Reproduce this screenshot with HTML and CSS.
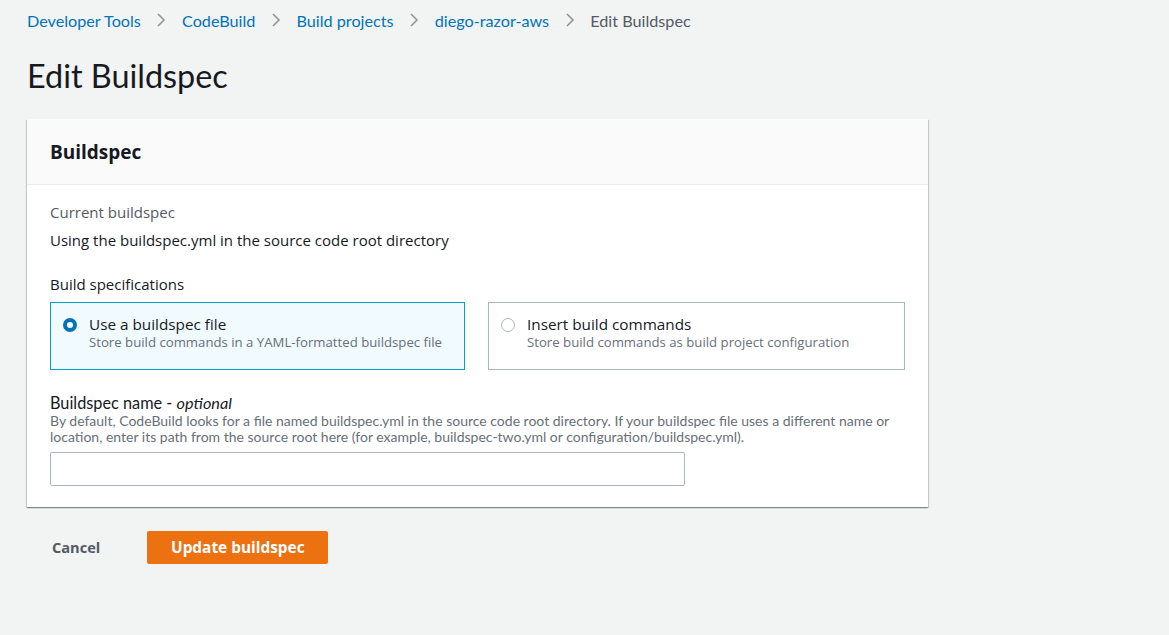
FILE: index.html
```html
<!DOCTYPE html>
<html lang="en">
<head>
<meta charset="utf-8">
<title>Edit Buildspec</title>
<link rel="stylesheet" href="styles.css">
</head>
<body>
<div class="page">
  <nav class="crumbs">
    <a class="crumb" href="#">Developer Tools</a>
    <svg class="chev" width="10" height="16" viewBox="0 0 10 16"><polyline points="2,2 8,8 2,14" fill="none" stroke="#879596" stroke-width="1.5"/></svg>
    <a class="crumb" href="#">CodeBuild</a>
    <svg class="chev" width="10" height="16" viewBox="0 0 10 16"><polyline points="2,2 8,8 2,14" fill="none" stroke="#879596" stroke-width="1.5"/></svg>
    <a class="crumb" href="#">Build projects</a>
    <svg class="chev" width="10" height="16" viewBox="0 0 10 16"><polyline points="2,2 8,8 2,14" fill="none" stroke="#879596" stroke-width="1.5"/></svg>
    <a class="crumb" href="#">diego-razor-aws</a>
    <svg class="chev" width="10" height="16" viewBox="0 0 10 16"><polyline points="2,2 8,8 2,14" fill="none" stroke="#879596" stroke-width="1.5"/></svg>
    <span class="crumb current">Edit Buildspec</span>
  </nav>

  <h1 class="title">Edit Buildspec</h1>

  <section class="card">
    <header class="card-head">
      <h2 class="card-title">Buildspec</h2>
    </header>
    <div class="card-body">
      <div class="kv">
        <div class="kv-label">Current buildspec</div>
        <div class="kv-value">Using the buildspec.yml in the source code root directory</div>
      </div>

      <div class="field">
        <div class="field-label">Build specifications</div>
        <div class="tiles">
          <label class="tile selected">
            <span class="radio on"></span>
            <span class="tile-text">
              <span class="tile-title">Use a buildspec file</span>
              <span class="tile-desc">Store build commands in a YAML-formatted buildspec file</span>
            </span>
          </label>
          <label class="tile">
            <span class="radio"></span>
            <span class="tile-text">
              <span class="tile-title">Insert build commands</span>
              <span class="tile-desc">Store build commands as build project configuration</span>
            </span>
          </label>
        </div>
      </div>

      <div class="field name-field">
        <div class="name-label">Buildspec name - <i>optional</i></div>
        <div class="name-desc">By default, CodeBuild looks for a file named buildspec.yml in the source code root directory. If your buildspec file uses a different name or location, enter its path from the source root here (for example, buildspec-two.yml or configuration/buildspec.yml).</div>
        <input class="text-input" type="text">
      </div>
    </div>
  </section>

  <div class="actions">
    <button class="btn-link">Cancel</button>
    <button class="btn-primary">Update buildspec</button>
  </div>
</div>
</body>
</html>
```

FILE: styles.css
```css
html, body {
  margin: 0;
  padding: 0;
  background: #f2f3f3;
  height: 100%;
}
body {
  font-family: "Open Sans", "Noto Sans", sans-serif;
  color: #16191f;
}
.page {
  padding: 9px 0 0 27px;
  width: 901px;
}
.crumbs {
  display: flex;
  align-items: center;
  gap: 15.6px;
  height: 22px;
  font-family: Lato, sans-serif;
  font-size: 16.2px;
}
.crumb {
  color: #0073bb;
  text-decoration: none;
}
.crumb.current {
  color: #545b64;
}
.chev {
  display: block;
}
.title {
  margin: 26px 0 0;
  font-family: Lato, sans-serif;
  font-weight: 400;
  font-size: 32.4px;
  line-height: 38px;
  color: #16191f;
}
.card {
  margin-top: 24px;
  background: #fff;
  box-shadow: 0 1px 1px 0 rgba(0,28,36,.3), 1px 1px 1px 0 rgba(0,28,36,.15), -1px 1px 1px 0 rgba(0,28,36,.15);
}
.card-head {
  background: #fafafa;
  border-bottom: 1px solid #eaeded;
  height: 65px;
  display: flex;
  align-items: center;
  padding: 0 23px;
}
.card-title {
  margin: 0;
  font-size: 19px;
  font-weight: 700;
  color: #16191f;
}
.card-body {
  padding: 16px 23px 21px;
  font-size: 15px;
}
.kv-label {
  color: #545b64;
  line-height: 22px;
}
.kv-value {
  margin-top: 6px;
  line-height: 22px;
}
.field {
  margin-top: 22px;
}
.field-label {
  line-height: 22px;
}
.tiles {
  margin-top: 7px;
  display: grid;
  grid-template-columns: 415px 417px;
  gap: 23px;
}
.tile {
  display: flex;
  align-items: flex-start;
  gap: 12px;
  height: 68px;
  box-sizing: border-box;
  border: 1px solid #aab7b8;
  padding: 11px 12px;
  background: #fff;
}
.tile.selected {
  background: #f1faff;
  border-color: #00a1c9;
}
.radio {
  flex: none;
  width: 14px;
  height: 14px;
  margin-top: 4px;
  box-sizing: border-box;
  border-radius: 50%;
  border: 1px solid #aab7b8;
  background: #fff;
}
.radio.on {
  border: 4px solid #0073bb;
}
.tile-text {
  display: flex;
  flex-direction: column;
}
.tile-title {
  font-size: 15.3px;
  line-height: 20px;
  color: #16191f;
}
.tile-desc {
  font-size: 13.2px;
  line-height: 17px;
  color: #687078;
}
.name-field {
  margin-top: 23px;
}
.name-label {
  font-family: Lato, sans-serif;
  font-size: 16.3px;
  line-height: 20px;
}
.name-desc {
  max-width: 850px;
  font-family: Lato, sans-serif;
  font-size: 14px;
  line-height: 16px;
  color: #687078;
}
.text-input {
  display: block;
  margin-top: 7px;
  width: 635px;
  height: 34px;
  box-sizing: border-box;
  border: 1px solid #aab7b8;
  border-radius: 2px;
  background: #fff;
}
.actions {
  margin-top: 24px;
  display: flex;
  align-items: center;
  gap: 47px;
  padding-left: 25px;
}
.btn-link {
  border: 0;
  background: transparent;
  padding: 0 0 2px;
  font-family: "Open Sans", sans-serif;
  font-size: 14.6px;
  font-weight: 700;
  color: #545b64;
}
.btn-primary {
  border: 0;
  border-radius: 2px;
  background: #ec7211;
  color: #fff;
  font-family: "Open Sans", sans-serif;
  font-size: 15.4px;
  font-weight: 700;
  width: 181px;
  height: 33px;
}
```
